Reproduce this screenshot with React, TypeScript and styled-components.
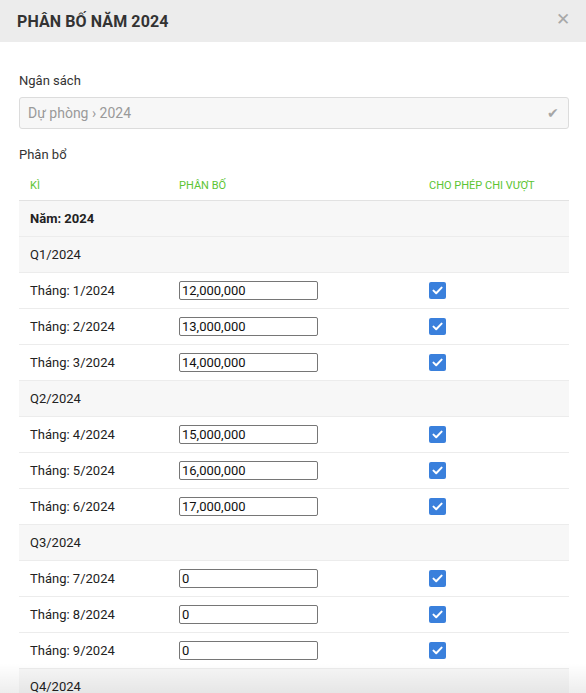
import React from "react"
import styled, { createGlobalStyle } from "styled-components"

const GlobalStyle = createGlobalStyle`
  html, body {
    margin: 0;
    padding: 0;
    background: #fff;
    font-family: Roboto, "Noto Sans", "Liberation Sans", sans-serif;
    color: #222;
    overflow: hidden;
  }
`

const Modal = styled.div`
  position: relative;
  width: 586px;
  height: 693px;
  overflow: hidden;
  background: #fff;
`

const Header = styled.div`
  height: 42px;
  background: #ececec;
  display: flex;
  align-items: center;
  justify-content: space-between;
  padding: 0 16px 0 17px;
`

const Title = styled.div`
  font-size: 16px;
  font-weight: 700;
  color: #333;
  letter-spacing: 0.1px;
`

const Close = styled.div`
  color: #a8a8a8;
  font-size: 17px;
  line-height: 1;
  margin-top: -4px;
`

const Body = styled.div`
  padding: 31px 17px 0 19px;
`

const Label = styled.div`
  font-size: 13px;
  color: #333;
  margin-bottom: 9px;
`

const SelectBox = styled.div`
  height: 30px;
  border: 1px solid #dcdcdc;
  border-radius: 3px;
  background: #f7f7f7;
  display: flex;
  align-items: center;
  justify-content: space-between;
  padding: 0 9px 0 8px;
  font-size: 14px;
  color: #9a9a9a;
  margin-bottom: 18px;
`

const Tick = styled.span`
  color: #a6a6a6;
  font-size: 14px;
`

const Table = styled.div`
  width: 550px;
  margin-top: 10px;
`

const HeadRow = styled.div`
  display: grid;
  grid-template-columns: 149px 250px 151px;
  height: 26px;
  align-items: center;
  border-bottom: 1px solid #e2e2e2;
  color: #5cc433;
  font-size: 11px;
  text-transform: uppercase;
  padding-bottom: 2px;
`

const Row = styled.div<{ $shade?: boolean; $bold?: boolean }>`
  display: grid;
  grid-template-columns: 149px 250px 151px;
  height: 35px;
  align-items: center;
  border-bottom: 1px solid #ececec;
  background: ${(p) => (p.$shade ? "#f7f7f7" : "#fff")};
  font-size: 13px;
  font-weight: ${(p) => (p.$bold ? 700 : 400)};
  color: #222;
`

const Cell = styled.div`
  padding-left: 11px;
  display: flex;
  align-items: center;
`

const Amount = styled.input`
  box-sizing: border-box;
  width: 139px;
  height: 19px;
  border: 1px solid #767676;
  border-radius: 2px;
  padding: 0 2px;
  font-family: Roboto, "Liberation Sans", sans-serif;
  font-size: 13px;
  color: #111;
  background: #fff;
`

const Check = styled.span`
  width: 17px;
  height: 17px;
  border-radius: 2px;
  background: #3a80dc;
  display: inline-flex;
  align-items: center;
  justify-content: center;
`

const Fade = styled.div`
  position: absolute;
  left: 0;
  right: 0;
  bottom: 0;
  height: 30px;
  background: linear-gradient(to bottom, rgba(0, 0, 0, 0), rgba(0, 0, 0, 0.07));
  pointer-events: none;
`

const quarters = [
  { name: "Q1/2024", months: [["1/2024", "12,000,000"], ["2/2024", "13,000,000"], ["3/2024", "14,000,000"]] },
  { name: "Q2/2024", months: [["4/2024", "15,000,000"], ["5/2024", "16,000,000"], ["6/2024", "17,000,000"]] },
  { name: "Q3/2024", months: [["7/2024", "0"], ["8/2024", "0"], ["9/2024", "0"]] },
  { name: "Q4/2024", months: [["10/2024", "0"], ["11/2024", "0"], ["12/2024", "0"]] },
]

const CheckIcon = () => (
  <Check>
    <svg width="11" height="9" viewBox="0 0 11 9">
      <path d="M1.5 4.6 L4.2 7.2 L9.6 1.6" fill="none" stroke="#fff" strokeWidth="2" strokeLinecap="round" strokeLinejoin="round" />
    </svg>
  </Check>
)

export default function App() {
  return (
    <Modal>
      <GlobalStyle />
      <Header>
        <Title>PHÂN BỐ NĂM 2024</Title>
        <Close>✕</Close>
      </Header>
      <Body>
        <Label>Ngân sách</Label>
        <SelectBox>
          <span>Dự phòng › 2024</span>
          <Tick>✔</Tick>
        </SelectBox>
        <Label>Phân bổ</Label>
        <Table>
          <HeadRow>
            <Cell>Kì</Cell>
            <Cell>Phân bố</Cell>
            <Cell>Cho phép chi vượt</Cell>
          </HeadRow>
          <Row $shade $bold>
            <Cell>Năm: 2024</Cell>
          </Row>
          {quarters.map((q) => (
            <React.Fragment key={q.name}>
              <Row $shade>
                <Cell>{q.name}</Cell>
              </Row>
              {q.months.map(([m, v]) => (
                <Row key={m}>
                  <Cell>Tháng: {m}</Cell>
                  <Cell>
                    <Amount defaultValue={v} />
                  </Cell>
                  <Cell>
                    <CheckIcon />
                  </Cell>
                </Row>
              ))}
            </React.Fragment>
          ))}
        </Table>
      </Body>
      <Fade />
    </Modal>
  )
}
